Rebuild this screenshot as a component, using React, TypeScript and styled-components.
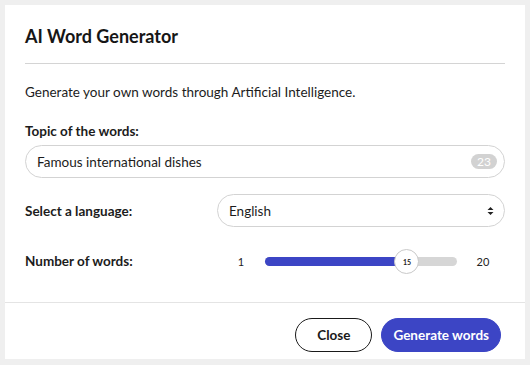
import React from 'react';
import styled, { createGlobalStyle } from 'styled-components';

const GlobalStyle = createGlobalStyle`
  html, body {
    margin: 0;
    padding: 0;
    background: #efefef;
  }
  body {
    font-family: 'Lato', 'Noto Sans', sans-serif;
    color: #1c1c1c;
  }
`;

const Page = styled.div`
  width: 530px;
  height: 365px;
  padding: 5px;
  box-sizing: border-box;
`;

const Card = styled.div`
  background: #ffffff;
  width: 520px;
  height: 354px;
  display: flex;
  flex-direction: column;
`;

const Body = styled.div`
  padding: 0 20px;
  display: flex;
  flex-direction: column;
`;

const Title = styled.h1`
  margin: 0;
  padding: 20px 0 16px;
  font-size: 18px;
  line-height: 22px;
  font-weight: 700;
  border-bottom: 1px solid #d4d4d4;
  color: #161616;
`;

const Intro = styled.p`
  margin: 18px 0 0;
  font-size: 13.5px;
  line-height: 20px;
`;

const Label = styled.label`
  font-size: 13.5px;
  font-weight: 700;
  line-height: 18px;
`;

const Field = styled.div`
  margin-top: 20px;
  display: flex;
  flex-direction: column;
  gap: 5px;
`;

const InputBox = styled.div`
  height: 33px;
  border: 1px solid #d3d3d3;
  border-radius: 17px;
  display: flex;
  align-items: center;
  justify-content: space-between;
  padding: 0 7px 0 11px;
  box-sizing: border-box;
  font-size: 13.5px;
`;

const Counter = styled.span`
  background: #d2d2d2;
  color: #ffffff;
  font-size: 12px;
  border-radius: 8px;
  padding: 1px 6px;
  line-height: 13px;
`;

const Row = styled.div<{ top: number }>`
  margin-top: ${(p) => p.top}px;
  display: grid;
  grid-template-columns: 192px 1fr;
  align-items: center;
`;

const SelectBox = styled.div`
  height: 33px;
  border: 1px solid #d3d3d3;
  border-radius: 17px;
  display: flex;
  align-items: center;
  justify-content: space-between;
  padding: 0 10px 0 11px;
  box-sizing: border-box;
  font-size: 13.5px;
`;

const SliderWrap = styled.div`
  display: flex;
  align-items: center;
  font-size: 11px;
  color: #222;
`;

const Bound = styled.span<{ w: number }>`
  width: ${(p) => p.w}px;
  text-align: center;
`;

const Track = styled.div`
  position: relative;
  width: 192px;
  height: 9px;
  border-radius: 5px;
  background: #d6d6d6;
`;

const Fill = styled.div`
  height: 100%;
  border-radius: 5px;
  background: #3c45c5;
`;

const Thumb = styled.div`
  position: absolute;
  top: 50%;
  width: 23px;
  height: 23px;
  margin-left: -12px;
  margin-top: -12px;
  border-radius: 50%;
  background: #fff;
  border: 1px solid #c9c9c9;
  display: flex;
  align-items: center;
  justify-content: center;
  font-size: 7px;
  font-weight: 700;
`;

const Footer = styled.div`
  margin-top: auto;
  border-top: 1px solid #e4e4e4;
  height: 57px;
  box-sizing: border-box;
  display: flex;
  align-items: flex-start;
  justify-content: flex-end;
  gap: 9px;
  padding: 15px 24px 0 0;
`;

const Button = styled.button<{ primary?: boolean }>`
  height: 34px;
  border-radius: 17px;
  font-family: inherit;
  font-size: 13.5px;
  font-weight: 700;
  padding: 0 ${(p) => (p.primary ? 11 : 21)}px;
  border: 1px solid ${(p) => (p.primary ? '#3c45c5' : '#1a1a1a')};
  background: ${(p) => (p.primary ? '#3c45c5' : '#fff')};
  color: ${(p) => (p.primary ? '#fff' : '#1a1a1a')};
`;

const Arrows = () => (
  <svg width="7" height="10" viewBox="0 0 7 10">
    <path d="M3.5 1 L6.5 4 H0.5 Z M3.5 9 L6.5 6 H0.5 Z" fill="#222" />
  </svg>
);

export default function App() {
  const min = 1;
  const max = 20;
  const value = 15;
  const pct = ((value - min) / (max - min)) * 100;
  return (
    <Page>
      <GlobalStyle />
      <Card>
        <Body>
          <Title>AI Word Generator</Title>
          <Intro>Generate your own words through Artificial Intelligence.</Intro>
          <Field>
            <Label>Topic of the words:</Label>
            <InputBox>
              <span>Famous international dishes</span>
              <Counter>23</Counter>
            </InputBox>
          </Field>
          <Row top={16}>
            <Label>Select a language:</Label>
            <SelectBox>
              <span>English</span>
              <Arrows />
            </SelectBox>
          </Row>
          <Row top={25}>
            <Label>Number of words:</Label>
            <SliderWrap>
              <Bound w={48}>{min}</Bound>
              <Track>
                <Fill style={{ width: `${pct}%` }} />
                <Thumb style={{ left: `${pct}%` }}>{value}</Thumb>
              </Track>
              <Bound w={52}>{max}</Bound>
            </SliderWrap>
          </Row>
        </Body>
        <Footer>
          <Button>Close</Button>
          <Button primary>Generate words</Button>
        </Footer>
      </Card>
    </Page>
  );
}
